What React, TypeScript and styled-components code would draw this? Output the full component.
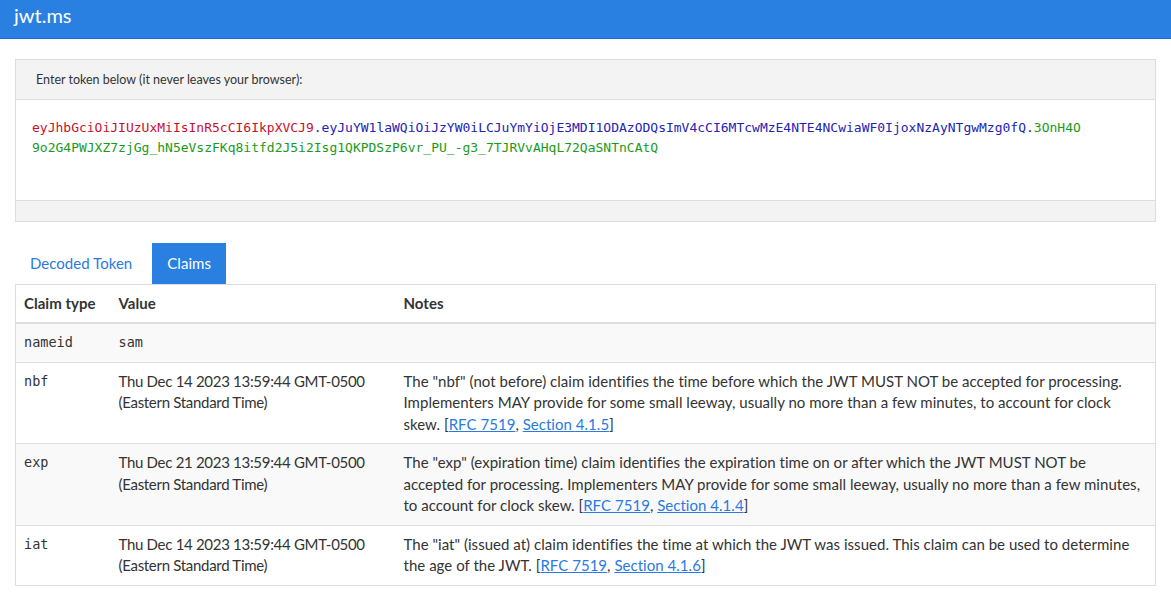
import React from "react";
import styled, { createGlobalStyle } from "styled-components";

const Global = createGlobalStyle`
  html, body { margin: 0; padding: 0; background: #fff; }
  body {
    font-family: Lato, "Open Sans", "Noto Sans", sans-serif;
    font-size: 15px;
    line-height: 21.43px;
    letter-spacing: 0.03px;
    color: #333;
  }
  * { box-sizing: border-box; }
`;

const TopBar = styled.header`
  height: 39px;
  background: #2980e0;
  border-bottom: 1px solid #1b6ccb;
  display: flex;
  align-items: flex-start;
  padding: 2px 14px 0;
`;

const Brand = styled.div`
  color: #fff;
  font-size: 20px;
  line-height: 26px;
  letter-spacing: 0;
`;

const Container = styled.main`
  padding: 20px 15px 20px;
`;

const Panel = styled.section`
  border: 1px solid #ddd;
  background: #fff;
`;

const PanelHeading = styled.div`
  background: #f3f3f3;
  border-bottom: 1px solid #ddd;
  height: 40px;
  display: flex;
  align-items: center;
  padding: 0 20px;
  font-size: 12.5px;
  letter-spacing: 0;
`;

const PanelBody = styled.div`
  height: 100px;
  padding: 18px 16px 16px;
`;

const Token = styled.div`
  font-family: "DejaVu Sans Mono", "Liberation Mono", monospace;
  font-size: 13px;
  line-height: 20px;
  letter-spacing: 0;
  width: 134.6ch;
  word-break: break-all;
`;

const Part = styled.span<{ $c: string }>`
  color: ${(p) => p.$c};
`;

const PanelFooter = styled.div`
  height: 21px;
  background: #f3f3f3;
  border-top: 1px solid #ddd;
`;

const Tabs = styled.nav`
  display: flex;
  gap: 5px;
  margin-top: 21px;
`;

const Tab = styled.div<{ $active?: boolean }>`
  height: 41px;
  padding: 0 15px;
  display: flex;
  align-items: center;
  color: ${(p) => (p.$active ? "#fff" : "#2a7ae2")};
  background: ${(p) => (p.$active ? "#2980e0" : "transparent")};
`;

const Table = styled.table`
  width: 100%;
  border-collapse: collapse;
  border: 1px solid #ddd;
`;

const Th = styled.th<{ $w?: number }>`
  text-align: left;
  font-weight: 700;
  padding: 8px;
  border-bottom: 2px solid #ddd;
  vertical-align: bottom;
  width: ${(p) => (p.$w ? `${p.$w}px` : "auto")};
`;

const Tr = styled.tr<{ $striped?: boolean }>`
  background: ${(p) => (p.$striped ? "#f9f9f9" : "#fff")};
`;

const Td = styled.td<{ $mono?: boolean; $tight?: boolean }>`
  padding: 8px;
  border-top: 1px solid #ddd;
  vertical-align: top;
  line-height: 21.5px;
  font-family: ${(p) =>
    p.$mono ? `"DejaVu Sans Mono", "Liberation Mono", monospace` : "inherit"};
  font-size: ${(p) => (p.$mono ? "13.5px" : "inherit")};
  letter-spacing: ${(p) => (p.$mono ? "0" : p.$tight ? "-0.3px" : "inherit")};
`;

const Link = styled.a`
  color: #2a7ae2;
  text-decoration: underline;
`;

type Row = {
  type: string;
  value: string;
  valueMono?: boolean;
  note?: React.ReactNode;
};

const Ref = ({ section }: { section: string }) => (
  <>
    [<Link href="#">RFC 7519</Link>, <Link href="#">Section {section}</Link>]
  </>
);

const rows: Row[] = [
  { type: "nameid", value: "sam", valueMono: true },
  {
    type: "nbf",
    value: "Thu Dec 14 2023 13:59:44 GMT-0500 (Eastern Standard Time)",
    note: (
      <>
        The "nbf" (not before) claim identifies the time before which the JWT MUST NOT be
        accepted for processing. Implementers MAY provide for some small leeway, usually no
        more than a few minutes, to account for clock skew. <Ref section="4.1.5" />
      </>
    ),
  },
  {
    type: "exp",
    value: "Thu Dec 21 2023 13:59:44 GMT-0500 (Eastern Standard Time)",
    note: (
      <>
        The "exp" (expiration time) claim identifies the expiration time on or after which the
        JWT MUST NOT be accepted for processing. Implementers MAY provide for some small
        leeway, usually no more than a few minutes, to account for clock skew.{" "}
        <Ref section="4.1.4" />
      </>
    ),
  },
  {
    type: "iat",
    value: "Thu Dec 14 2023 13:59:44 GMT-0500 (Eastern Standard Time)",
    note: (
      <>
        The "iat" (issued at) claim identifies the time at which the JWT was issued. This claim
        can be used to determine the age of the JWT. <Ref section="4.1.6" />
      </>
    ),
  },
];

export default function App() {
  return (
    <>
      <Global />
      <TopBar>
        <Brand>jwt.ms</Brand>
      </TopBar>
      <Container>
        <Panel>
          <PanelHeading>Enter token below (it never leaves your browser):</PanelHeading>
          <PanelBody>
            <Token>
              <Part $c="#c8102e">eyJhbGciOiJIUzUxMiIsInR5cCI6IkpXVCJ9</Part>
              <Part $c="#2323b4">
                .eyJuYW1laWQiOiJzYW0iLCJuYmYiOjE3MDI1ODAzODQsImV4cCI6MTcwMzE4NTE4NCwiaWF0IjoxNzAyNTgwMzg0fQ.
              </Part>
              <Part $c="#1a9a1a">3OnH4O</Part>
              <Part $c="#1a9a1a">
                9o2G4PWJXZ7zjGg_hN5eVszFKq8itfd2J5i2Isg1QKPDSzP6vr_PU_-g3_7TJRVvAHqL72QaSNTnCAtQ
              </Part>
            </Token>
          </PanelBody>
          <PanelFooter />
        </Panel>
        <Tabs>
          <Tab>Decoded Token</Tab>
          <Tab $active>Claims</Tab>
        </Tabs>
        <Table>
          <thead>
            <tr>
              <Th $w={95}>Claim type</Th>
              <Th $w={285}>Value</Th>
              <Th>Notes</Th>
            </tr>
          </thead>
          <tbody>
            {rows.map((r, i) => (
              <Tr key={r.type} $striped={i % 2 === 0}>
                <Td $mono>{r.type}</Td>
                <Td $mono={r.valueMono} $tight>
                  {r.value}
                </Td>
                <Td>{r.note}</Td>
              </Tr>
            ))}
          </tbody>
        </Table>
      </Container>
    </>
  );
}
